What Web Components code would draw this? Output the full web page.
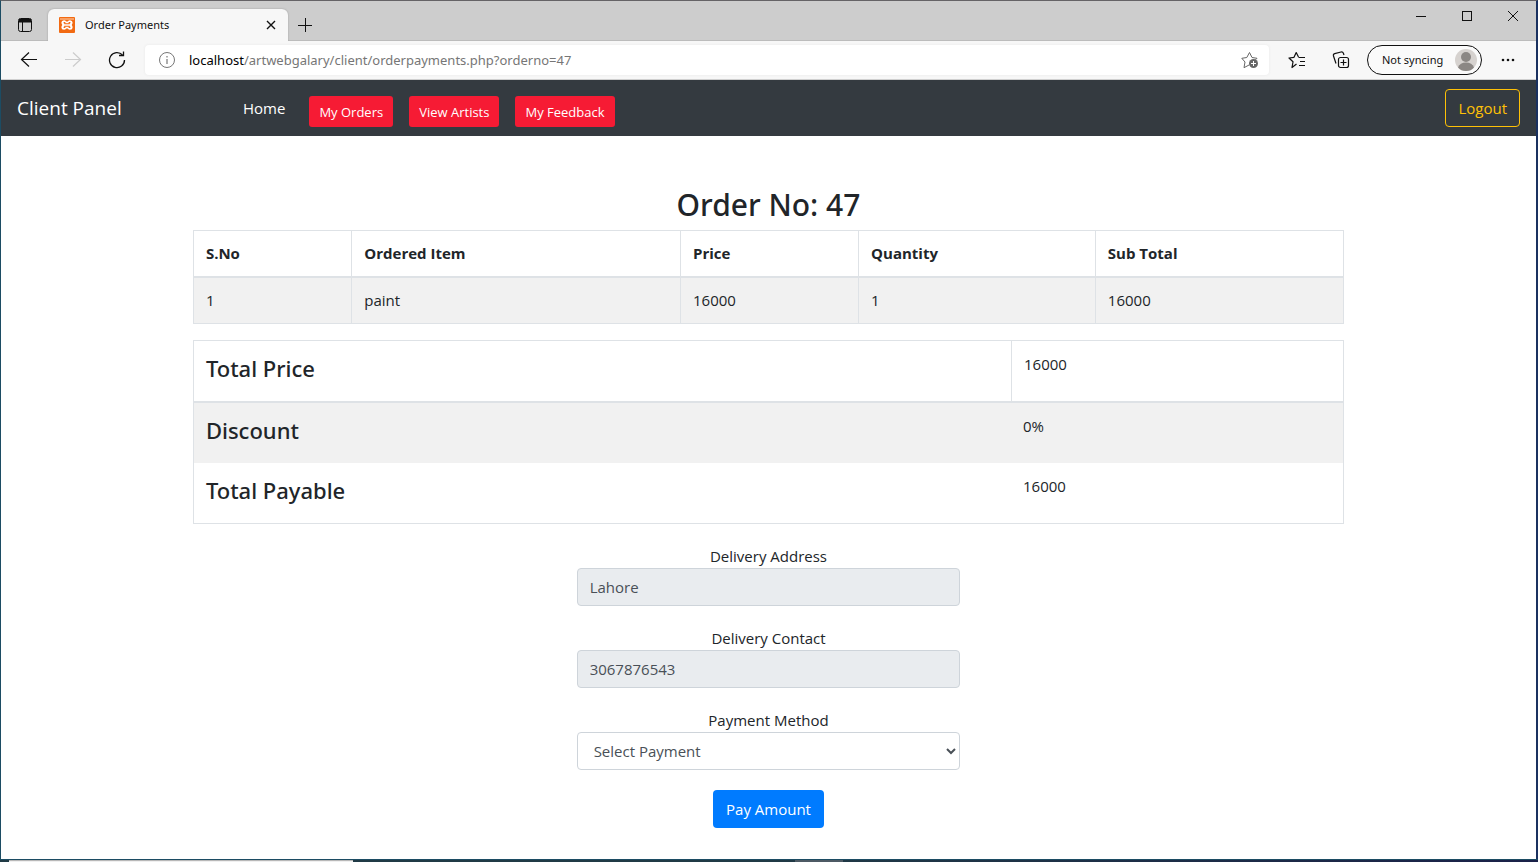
<!DOCTYPE html>
<html lang="en">
<head>
<meta charset="utf-8">
<title>Order Payments</title>
<style>
  body { margin: 0; font: 15px/24px "Open Sans", "Noto Sans", sans-serif; color: #212529; background: #fff; }
</style>
</head>
<body>
<app-window>
  <tab-strip slot="chrome" label="Order Payments"></tab-strip>
  <address-bar slot="chrome" host="localhost" path="/artwebgalary/client/orderpayments.php?orderno=47"></address-bar>
  <site-nav></site-nav>
  <order-page>
    <order-items></order-items>
    <order-totals></order-totals>
    <payment-form></payment-form>
  </order-page>
  <task-bar slot="desktop"></task-bar>
</app-window>

<script>
const define = (name, html, setup) => {
  const template = document.createElement('template');
  template.innerHTML = '<style>:host,*{box-sizing:border-box}</style>' + html;
  customElements.define(name, class extends HTMLElement {
    constructor() {
      super();
      this.attachShadow({ mode: 'open' }).append(template.content.cloneNode(true));
    }
    connectedCallback() { if (setup) setup(this, this.shadowRoot); }
  });
};

define('app-window', `
  <style>
    :host { display: flex; flex-direction: column; min-height: 100vh; }
    .frame { flex: 1; display: flex; flex-direction: column; background: #fff;
      border-top: 1px solid #656366; border-left: 1px solid #1c4c63; border-right: 2px solid #1a3160; }
  </style>
  <div class="frame"><slot name="chrome"></slot><slot></slot></div>
  <slot name="desktop"></slot>`);

define('tab-strip', `
  <style>
    :host { display: flex; height: 40px; background: #cdcdcd; border-bottom: 1px solid #bcbcbc; font-family: "Noto Sans", sans-serif; font-size: 11px; line-height: 16px; color: #111; }
    button { border: 0; background: none; padding: 0; display: grid; place-items: center; color: inherit; }
    svg { display: block; }
    .menu { width: 47px; padding-top: 8px; }
    .tab { flex: 0 1 240px; display: flex; align-items: center; gap: 10px; margin: 8px 0 -1px; padding: 0 11px;
      background: #f7f7f7; border-radius: 6px 6px 0 0; box-shadow: 0 0 2px #999; clip-path: inset(-2px -2px 0 -2px); }
    .tab span { flex: 1; white-space: nowrap; }
    .new { width: 34px; padding-top: 8px; }
    .controls { margin-left: auto; display: flex; height: 29px; }
    .controls button { width: 46px; }
  </style>
  <button class="menu" aria-label="Tab actions"><svg width="16" height="16" fill="none" stroke="#111"><rect x="1.5" y="1.5" width="13" height="13" rx="2"/><path d="M2 3h12M2 4.500h12" stroke-width="2"/><path d="M5.500 5v9"/></svg></button>
  <div class="tab">
    <svg width="16" height="16" viewBox="0 0 16 16"><rect width="16" height="16" rx="1" fill="#f26a12"/><path d="M1 1h14v2H1z" fill="#f9a064"/><path d="M5 3.200q1.400 0 2.200 1.300h1.600Q9.600 3.200 11 3.200q2.600.2 2.600 2.400 0 1.400-.9 2.400.9 1 .9 2.400 0 2.200-2.600 2.400-1.400 0-2.200-1.300H7.200Q6.400 12.800 5 12.800q-2.600-.2-2.600-2.400 0-1.400.9-2.400-.9-1-.9-2.400Q2.400 3.400 5 3.200z" fill="#fff"/><path d="M4.600 5.600h1.200v1.100h4.400V5.600h1.200M4.600 10.400h1.200V9.300h4.400v1.100h1.200" fill="none" stroke="#f26a12" stroke-width="1.100"/></svg>
    <span></span>
    <button aria-label="Close tab"><svg width="12" height="12" stroke="#111" stroke-width="1.400"><path d="M2 2l8 8M10 2l-8 8"/></svg></button>
  </div>
  <button class="new" aria-label="New tab"><svg width="16" height="16" stroke="#111"><path d="M1 8.500h14M8.500 1v14"/></svg></button>
  <div class="controls">
    <button aria-label="Minimize"><svg width="12" height="12" stroke="#111"><path d="M1 6.500h10"/></svg></button>
    <button aria-label="Maximize"><svg width="12" height="12" fill="none" stroke="#111"><rect x="1.500" y="1.500" width="9" height="9"/></svg></button>
    <button aria-label="Close"><svg width="12" height="12" stroke="#111"><path d="M1 1l10 10M11 1L1 11"/></svg></button>
  </div>`,
  (el, root) => { root.querySelector('.tab span').textContent = el.getAttribute('label'); });

define('address-bar', `
  <style>
    :host { display: flex; align-items: center; height: 39px; background: #f7f7f7; border-bottom: 1px solid #cfcfcf; font-family: "Noto Sans", sans-serif; color: #111; }
    button { border: 0; background: none; padding: 0; width: 44px; height: 30px; display: grid; place-items: center; font: inherit; color: inherit; }
    svg { display: block; }
    .back { margin-left: 6px; }
    .url { flex: 1; display: flex; align-items: center; height: 30px; margin-left: 6px; padding-right: 4px; background: #fff;
      border-radius: 4px; box-shadow: 0 0 3px #e8e8e8; font-size: 13px; white-space: nowrap; }
    .url span { flex: 1; color: #767676; }
    .url b { font-weight: 400; color: #000; }
    .url i { font-style: normal; }
    .url .fav { width: 30px; }
    .list { margin-left: 6px; }
    .profile { width: 115px; margin-left: 4px; padding: 0 4px 0 14px; display: flex; align-items: center; justify-content: space-between;
      border: 1px solid #111; border-radius: 15px; font-size: 11px; white-space: nowrap; background: #fafafa; }
    .more { width: 54px; }
  </style>
  <button class="back" aria-label="Back"><svg width="18" height="18" fill="none" stroke="#111" stroke-width="1.200"><path d="M17 8.500H1.500M9 1.500L1.500 8.500 9 15.500"/></svg></button>
  <button aria-label="Forward"><svg width="18" height="18" fill="none" stroke="#ccc" stroke-width="1.200"><path d="M1 8.500h15.500M9 1.500l7.500 7L9 15.500"/></svg></button>
  <button aria-label="Refresh"><svg width="18" height="18" fill="none" stroke="#111" stroke-width="1.300"><path d="M14.500 4A7.500 7.500 0 1 0 16.500 9"/><path d="M11 4.500h4.500V0.500"/></svg></button>
  <div class="url">
    <button aria-label="Site information"><svg width="18" height="18" fill="none" stroke="#777"><circle cx="9" cy="9" r="7.500"/><path d="M9 8v5M9 5v1.500" stroke-width="1.200"/></svg></button>
    <span><b></b><i></i></span>
    <button class="fav" aria-label="Add to favorites"><svg width="18" height="18" fill="none" stroke="#666"><path d="M8 14l-5 2.700 1-5.700L.8 7.300l5-.8L8.500 1.500 11 6.500l5 .8-1.500 1.500" stroke-linejoin="round"/><circle cx="12.500" cy="12.500" r="4.500" fill="#666" stroke="none"/><path d="M12.500 10v5M10 12.500h5" stroke="#fff"/></svg></button>
  </div>
  <button class="list" aria-label="Favorites"><svg width="18" height="18" fill="none" stroke="#111" stroke-width="1.200"><path d="M8.500 13L4 16.500l1-5.700L1 7l5-.7L8.200 1.500l2.300 4.500M10.500 6.500H17M12 10.500h5M11 14.500h6" stroke-linejoin="round"/></svg></button>
  <button aria-label="Collections"><svg width="18" height="18" fill="none" stroke="#111" stroke-width="1.200"><rect x="6.500" y="6.500" width="10" height="10" rx="2"/><path d="M11.500 8.500v6M8.500 11.500h6M4 12.500L1.500 5q-.5-1.800 1.200-2.300L9 1q1.800-.3 2.400 1.200L12 4"/></svg></button>
  <button class="profile">Not syncing<svg width="22" height="22"><circle cx="11" cy="11" r="11" fill="#d6d2cf"/><circle cx="11" cy="8" r="5" fill="#8b8784"/><path d="M3 18.500q2-5 8-5t8 5q-3 3.500-8 3.500t-8-3.500z" fill="#8b8784"/></svg></button>
  <button class="more" aria-label="Settings and more"><svg width="16" height="4" fill="#111"><circle cx="2" cy="2" r="1.300"/><circle cx="7" cy="2" r="1.300"/><circle cx="12" cy="2" r="1.300"/></svg></button>`,
  (el, root) => {
    root.querySelector('b').textContent = el.getAttribute('host');
    root.querySelector('i').textContent = el.getAttribute('path');
  });

define('site-nav', `
  <style>
    :host { display: block; background: #343a40; }
    nav { display: flex; align-items: center; min-height: 56px; padding: 0 16px; }
    a { color: #fff; text-decoration: none; white-space: nowrap; }
    .brand { width: 226px; font-size: 19px; }
    .links { display: flex; align-items: center; gap: 16px; }
    .home { margin-right: 8px; }
    .pill { margin-top: 7px; height: 31px; padding: 0 10px; border: 0; border-radius: 3px; background: #f61b34; color: #fff; font: inherit; font-size: 13px; white-space: nowrap; }
    .logout { margin-left: auto; height: 38px; padding: 0 12px; border: 1px solid #ffc107; border-radius: 4px; background: none; color: #ffc107; font: inherit; }
  </style>
  <nav>
    <a class="brand" href="#">Client Panel</a>
    <div class="links">
      <a class="home" href="#">Home</a>
      <button class="pill">My Orders</button>
      <button class="pill">View Artists</button>
      <button class="pill">My Feedback</button>
    </div>
    <button class="logout">Logout</button>
  </nav>`);

define('order-page', `
  <style>
    :host { display: block; width: 75%; margin: 0 auto; padding: 48px 0 31px; }
    h2 { margin: 0 0 4px; font: 500 30px/42px "Noto Sans", sans-serif; text-align: center; }
    main { display: flex; flex-direction: column; }
  </style>
  <main><h2>Order No: 47</h2><slot></slot></main>`);

const tableStyle = `
    table { width: 100%; table-layout: fixed; border-collapse: separate; border-spacing: 0; border: 1px solid #dee2e6; }
    th, td { text-align: left; vertical-align: top; line-height: 23px; }
    thead th, thead td { border-bottom: 2px solid #dee2e6; }
    tbody tr:nth-child(odd) { background: #f1f1f1; }`;

define('order-items', `
  <style>
    :host { display: block; margin-bottom: 16px; }
    ${tableStyle}
    th, td { padding: 11px 12px; }
    th + th, td + td { border-left: 1px solid #dee2e6; }
  </style>
  <table>
    <colgroup><col style="width:13.7%"><col style="width:28.6%"><col style="width:15.5%"><col style="width:20.6%"><col></colgroup>
    <thead><tr><th>S.No</th><th>Ordered Item</th><th>Price</th><th>Quantity</th><th>Sub Total</th></tr></thead>
    <tbody><tr><td>1</td><td>paint</td><td>16000</td><td>1</td><td>16000</td></tr></tbody>
  </table>`);

define('order-totals', `
  <style>
    :host { display: block; margin-bottom: 20px; }
    ${tableStyle}
    th, td { padding: 12px 12px 18px; }
    th { font: 500 22px/30px "Noto Sans", sans-serif; }
    thead td { border-left: 1px solid #dee2e6; }
  </style>
  <table>
    <colgroup><col style="width:71.1%"><col></colgroup>
    <thead><tr><th>Total Price</th><td>16000</td></tr></thead>
    <tbody>
      <tr><th>Discount</th><td>0%</td></tr>
      <tr><th>Total Payable</th><td>16000</td></tr>
    </tbody>
  </table>`);

define('payment-form', `
  <style>
    :host { display: block; width: calc(100% / 3); margin: 0 auto; }
    form { display: flex; flex-direction: column; align-items: center; gap: 20px; }
    .field { width: 100%; text-align: center; }
    label { display: block; }
    input, select { display: block; width: 100%; height: 38px; padding: 6px 12px; border: 1px solid #ced4da; border-radius: 4px;
      font: inherit; color: #495057; background: #fff; }
    input { background: #e9ecef; }
    button { height: 38px; padding: 0 13px; border: 0; border-radius: 4px; background: #007bff; color: #fff; font: inherit; }
  </style>
  <form>
    <div class="field"><label for="address">Delivery Address</label><input id="address" value="Lahore" readonly></div>
    <div class="field"><label for="contact">Delivery Contact</label><input id="contact" value="3067876543" readonly></div>
    <div class="field"><label for="method">Payment Method</label><select id="method"><option>Select Payment</option></select></div>
    <button type="button">Pay Amount</button>
  </form>`);

define('task-bar', `
  <style>
    :host { display: flex; height: 3px; padding-left: 9px; border-top: 1px solid #1c4c63;
      background: linear-gradient(90deg, #203a45 50%, #1a2148); }
    .search { width: 344px; background: #f0f0f0; border-top: 1px solid #b8b8b8; }
    .active { width: 48px; margin-left: 442px; background: #4d5a64; }
  </style>
  <div class="search"></div><div class="active"></div>`);
</script>
</body>
</html>
